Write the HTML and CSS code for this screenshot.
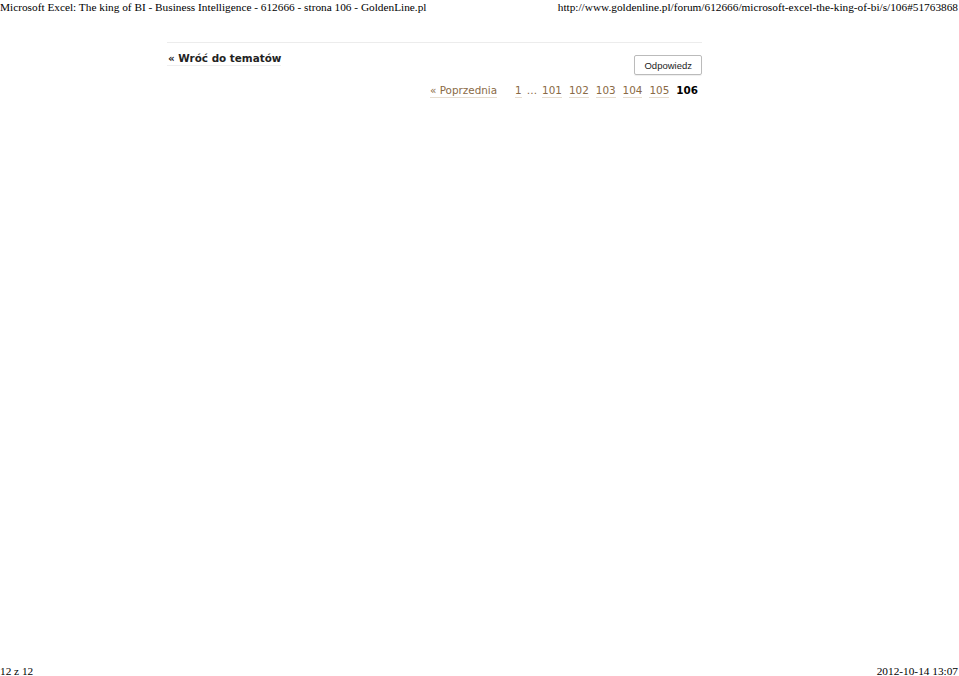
FILE: index.html
```html
<!DOCTYPE html>
<html lang="pl">
<head>
<meta charset="utf-8">
<title>Microsoft Excel: The king of BI</title>
<link rel="stylesheet" href="styles.css">
</head>
<body>
<div class="page">
  <header class="print-head">
    <span>Microsoft Excel: The king of BI - Business Intelligence - 612666 - strona 106 - GoldenLine.pl</span>
    <span>http://www.goldenline.pl/forum/612666/microsoft-excel-the-king-of-bi/s/106#51763868</span>
  </header>
  <main class="content">
    <div class="bar">
      <a class="back" href="#">« Wróć do tematów</a>
      <span class="btn">Odpowiedz</span>
    </div>
    <nav class="pager">
      <a class="prev" href="#">« Poprzednia</a>
      <a class="num first" href="#">1</a>
      <span class="dots">…</span>
      <a class="num" href="#">101</a>
      <a class="num" href="#">102</a>
      <a class="num" href="#">103</a>
      <a class="num" href="#">104</a>
      <a class="num" href="#">105</a>
      <strong class="cur">106</strong>
    </nav>
  </main>
  <footer class="print-foot">
    <span>12 z 12</span>
    <span>2012-10-14 13:07</span>
  </footer>
</div>
</body>
</html>
```
FILE: styles.css
```css
html, body { margin: 0; padding: 0; background: #fff; }
.page {
  height: 676px;
  display: flex;
  flex-direction: column;
  font-family: "Liberation Serif", serif;
  color: #000;
}
.print-head, .print-foot {
  display: flex;
  justify-content: space-between;
  font-size: 11.3px;
  line-height: 14px;
  padding: 0 1px 0 0;
}
.print-foot { margin-top: auto; line-height: 13px; margin-bottom: -2px; }
.content {
  margin: 28px 0 0 167px;
  width: 535px;
  border-top: 1px solid #ececec;
  font-family: "DejaVu Sans", Verdana, sans-serif;
}
.bar {
  display: flex;
  justify-content: space-between;
  align-items: flex-start;
  padding-top: 9px;
}
.back {
  font-size: 10.4px;
  font-weight: bold;
  color: #222;
  text-decoration: none;
  border-bottom: 1px solid #eee;
  line-height: 13px;
  padding-left: 1px;
}
.btn {
  margin-top: 3px;
  font-family: "Liberation Sans", Arial, sans-serif;
  font-size: 9.5px;
  color: #222;
  border: 1px solid #bbb;
  border-radius: 2px;
  padding: 5px 9px 4px 9px;
  line-height: 9px;
  box-shadow: 0 1px 1px #eee;
}
.pager {
  display: flex;
  justify-content: flex-end;
  align-items: baseline;
  margin-top: 9px;
  font-size: 10.4px;
  line-height: 13px;
  padding-right: 4px;
}
.pager a {
  color: #8a6a45;
  text-decoration: none;
  border-bottom: 1px solid #e6ddd0;
}
.prev { margin-right: 18px; }
.num { margin-right: 7px; }
.num.first { margin-right: 5px; }
.dots { color: #8a6a45; margin-right: 5px; }
.cur { color: #000; font-weight: bold; }
```
